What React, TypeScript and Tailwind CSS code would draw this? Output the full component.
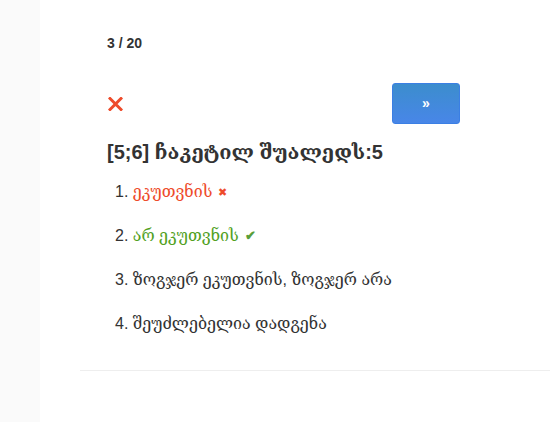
const answers = [
  { text: 'ეკუთვნის', state: 'wrong' },
  { text: 'არ ეკუთვნის', state: 'right' },
  { text: 'ზოგჯერ ეკუთვნის, ზოგჯერ არა', state: 'none' },
  { text: 'შეუძლებელია დადგენა', state: 'none' },
];

export default function App() {
  return (
    <div className="flex min-h-[422px] bg-white font-['Liberation_Sans','DejaVu_Serif',sans-serif] text-[#333]">
      <aside className="w-[40px] shrink-0 bg-[#fafafa]" />
      <main className="flex-1 pl-[40px]">
        <div className="pl-[27px] pt-[35px]">
          <div className="text-[14px] font-bold leading-[17px]">3 / 20</div>

          <div className="mt-[31px] flex w-[353px] items-center justify-between">
            <svg width="15" height="14" viewBox="0 0 15 14" className="ml-[1px]">
              <path d="M2 1.5 L13 12.5 M13 1.5 L2 12.5" stroke="#ee4b2b" strokeWidth="3" strokeLinecap="square" />
            </svg>
            <button className="flex h-[41px] w-[68px] items-center justify-center rounded-[3px] border border-[#3b7fe4] bg-gradient-to-b from-[#3c8dcd] to-[#4886e8] text-[14px] font-bold text-white">
              »
            </button>
          </div>

          <h2 className="mt-[14px] text-[20px] font-bold leading-[28px]">[5;6] ჩაკეტილ შუალედს:5</h2>

          <ol className="mt-[4px]">
            {answers.map((a, i) => (
              <li key={i} className="flex h-[44px] items-center pl-[8px] text-[16px] leading-[24px]">
                <span className="whitespace-pre">{i + 1}. </span>
                <span
                  className={
                    a.state === 'wrong'
                      ? 'text-[#ee4b2b]'
                      : a.state === 'right'
                        ? 'text-[#52a11f]'
                        : ''
                  }
                >
                  {a.text}
                </span>
                {a.state === 'wrong' && (
                  <span className="ml-[6px] text-[11px] text-[#ee4b2b]">✖</span>
                )}
                {a.state === 'right' && (
                  <span className="ml-[6px] text-[13px] font-bold text-[#5a9e3a]">✔</span>
                )}
              </li>
            ))}
          </ol>
        </div>
        <div className="mt-[24px] border-t border-[#eeeeee]" />
      </main>
    </div>
  );
}
